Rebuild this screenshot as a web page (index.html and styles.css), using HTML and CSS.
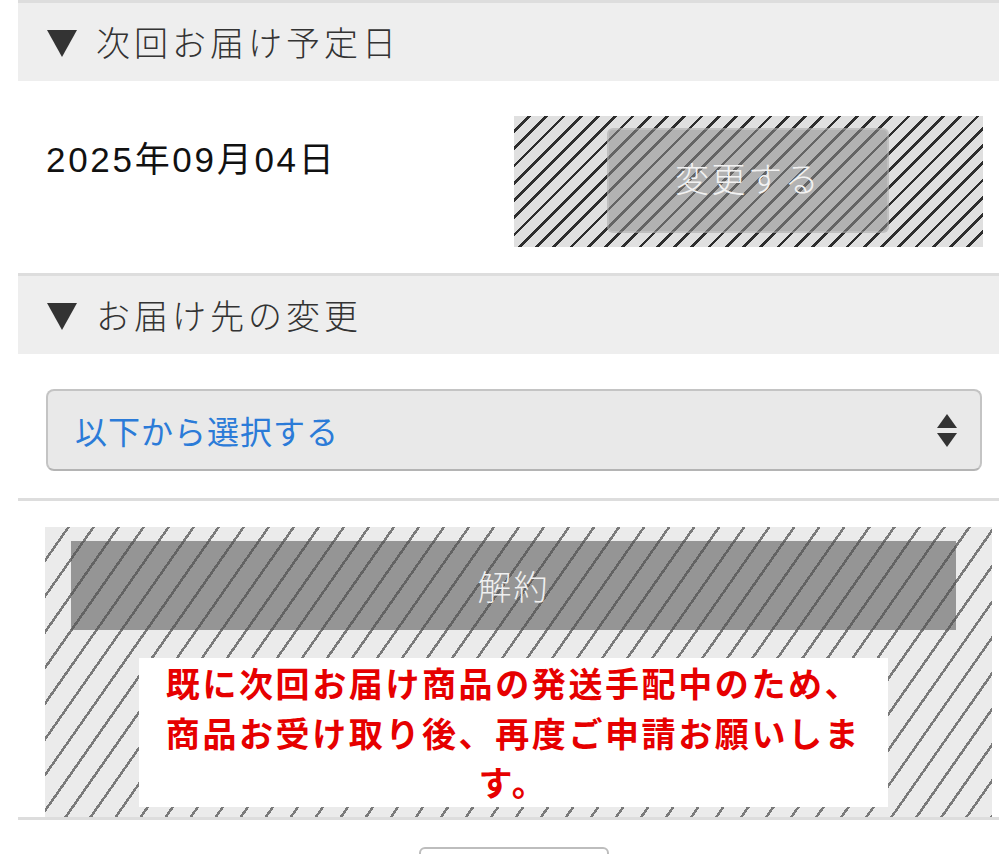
FILE: index.html
```
<!DOCTYPE html>
<html lang="ja">
<head>
<meta charset="utf-8">
<title>定期便</title>
<link rel="stylesheet" href="styles.css">
</head>
<body>
<div class="page">
  <section class="block">
    <h2 class="section-head"><span class="tri"></span><span class="head-text">次回お届け予定日</span></h2>
    <div class="date-row">
      <div class="date">2025年09月04日</div>
      <div class="hatch hatch-dark">
        <div class="btn-change">変更する</div>
      </div>
    </div>
  </section>
  <section class="block">
    <h2 class="section-head"><span class="tri"></span><span class="head-text">お届け先の変更</span></h2>
    <div class="select-row">
      <div class="select-box">
        <span class="select-text">以下から選択する</span>
        <svg class="select-arrows" width="22" height="34" viewBox="0 0 22 34"><path d="M11 0 L21 14 L1 14 Z" fill="#333"/><path d="M1 19 L21 19 L11 33 Z" fill="#333"/></svg>
      </div>
    </div>
  </section>
  <section class="block cancel-block">
    <div class="hatch hatch-light">
      <div class="btn-cancel">解約</div>
      <p class="notice">既に次回お届け商品の発送手配中のため、商品お受け取り後、再度ご申請お願いします。</p>
    </div>
  </section>
  <div class="footer">
    <div class="btn-outline"></div>
  </div>
</div>
</body>
</html>
```

FILE: styles.css
```
html, body {
  margin: 0;
  padding: 0;
  background: #fff;
}
body {
  font-family: "Noto Sans CJK JP", "Noto Sans", sans-serif;
  color: #333;
  overflow: hidden;
}
.page {
  padding-left: 18px;
}
.block {
  border-top: 3px solid #dddddd;
}
.section-head {
  margin: 0;
  height: 78px;
  background: #eeeeee;
  display: flex;
  align-items: center;
  padding-left: 29px;
  font-size: 34px;
  font-weight: 300;
  color: #333;
  letter-spacing: 4px;
}
.tri {
  width: 0;
  height: 0;
  border-left: 15.5px solid transparent;
  border-right: 15.5px solid transparent;
  border-top: 27px solid #333;
  margin-right: 19px;
  margin-top: 2px;
}
.head-text {
  line-height: 1;
}
.date-row {
  display: flex;
  justify-content: space-between;
  align-items: flex-start;
  padding: 35px 16px 26px 28px;
}
.date {
  font-family: "Liberation Sans", "Noto Sans CJK JP", sans-serif;
  font-size: 35px;
  line-height: 42px;
  letter-spacing: 2.7px;
  color: #111;
  margin-top: 23px;
}
.hatch-dark {
  width: 469px;
  box-sizing: border-box;
  padding: 12px 94px 14px 93px;
  background-color: #e0e0e0;
  background-image: repeating-linear-gradient(135deg, transparent 0 9.6px, #2e2e2e 9.6px 12.2px);
}
.btn-change {
  height: 105px;
  box-sizing: border-box;
  border: 2px solid rgba(255, 255, 255, 0.18);
  border-radius: 6px;
  background: rgba(143, 143, 143, 0.56);
  color: #f2f2f2;
  font-size: 34px;
  font-weight: 300;
  letter-spacing: 2.5px;
  display: flex;
  align-items: center;
  justify-content: center;
  padding-bottom: 6px;
}
.select-row {
  padding: 35px 17px 27px 28px;
}
.select-box {
  height: 82px;
  box-sizing: border-box;
  border: 2px solid #c4c4c4;
  border-bottom-color: #b4b4b4;
  border-radius: 8px;
  background: #e9e9e9;
  display: flex;
  align-items: center;
  justify-content: space-between;
  padding: 0 22px 0 27px;
}
.select-text {
  color: #2b7bd8;
  font-size: 32px;
  letter-spacing: 1px;
}
.select-arrows {
  display: block;
  margin-top: 2px;
}
.cancel-block {
  padding: 26px 0 0 27px;
  border-bottom: 3px solid #dddddd;
}
.hatch-light {
  width: 947px;
  box-sizing: border-box;
  padding: 14px 36px 10px 26px;
  background-color: #ebebeb;
  background-image: repeating-linear-gradient(125deg, transparent 0 18px, #7a7a7a 18px 20.5px);
}
.btn-cancel {
  height: 89px;
  background: rgba(82, 82, 82, 0.56);
  color: #f0f0f0;
  font-size: 34px;
  font-weight: 300;
  letter-spacing: 2px;
  display: flex;
  align-items: center;
  justify-content: center;
}
.notice {
  width: 749px;
  box-sizing: border-box;
  margin: 28px auto 0;
  padding: 0 20px;
  background: #fff;
  color: #e60000;
  font-size: 34px;
  font-weight: 700;
  letter-spacing: 2.6px;
  line-height: 49.5px;
  text-align: center;
}
.footer {
  padding-top: 27px;
}
.btn-outline {
  margin-left: 401px;
  width: 190px;
  height: 60px;
  box-sizing: border-box;
  border: 2px solid #bdbdbd;
  border-radius: 6px;
  background: #fff;
}
```
